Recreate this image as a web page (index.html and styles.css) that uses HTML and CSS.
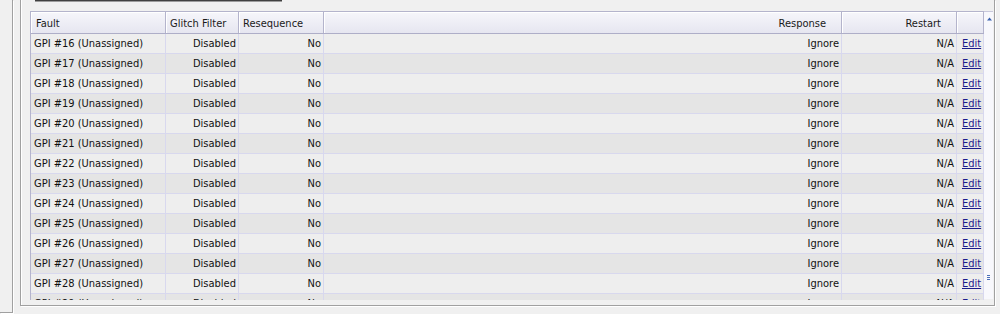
FILE: index.html
```html
<!DOCTYPE html>
<html>
<head>
<meta charset="utf-8">
<link rel="stylesheet" href="styles.css">
</head>
<body>
<div class="page">
  <div class="side"></div>
  <div class="frame">
    <div class="topbar"></div>
    <div class="tablewrap">
      <div class="grid">
        <div class="row head">
          <div class="hc">Fault</div>
          <div class="hc">Glitch Filter</div>
          <div class="hc">Resequence</div>
          <div class="hc r">Response</div>
          <div class="hc r">Restart</div>
          <div class="hc"></div>
        </div>
        <div class="body">
          <div class="row"><div class="c">GPI #16 (Unassigned)</div><div class="c r">Disabled</div><div class="c r">No</div><div class="c r">Ignore</div><div class="c r">N/A</div><div class="c e"><a>Edit</a></div></div>
          <div class="row"><div class="c">GPI #17 (Unassigned)</div><div class="c r">Disabled</div><div class="c r">No</div><div class="c r">Ignore</div><div class="c r">N/A</div><div class="c e"><a>Edit</a></div></div>
          <div class="row"><div class="c">GPI #18 (Unassigned)</div><div class="c r">Disabled</div><div class="c r">No</div><div class="c r">Ignore</div><div class="c r">N/A</div><div class="c e"><a>Edit</a></div></div>
          <div class="row"><div class="c">GPI #19 (Unassigned)</div><div class="c r">Disabled</div><div class="c r">No</div><div class="c r">Ignore</div><div class="c r">N/A</div><div class="c e"><a>Edit</a></div></div>
          <div class="row"><div class="c">GPI #20 (Unassigned)</div><div class="c r">Disabled</div><div class="c r">No</div><div class="c r">Ignore</div><div class="c r">N/A</div><div class="c e"><a>Edit</a></div></div>
          <div class="row"><div class="c">GPI #21 (Unassigned)</div><div class="c r">Disabled</div><div class="c r">No</div><div class="c r">Ignore</div><div class="c r">N/A</div><div class="c e"><a>Edit</a></div></div>
          <div class="row"><div class="c">GPI #22 (Unassigned)</div><div class="c r">Disabled</div><div class="c r">No</div><div class="c r">Ignore</div><div class="c r">N/A</div><div class="c e"><a>Edit</a></div></div>
          <div class="row"><div class="c">GPI #23 (Unassigned)</div><div class="c r">Disabled</div><div class="c r">No</div><div class="c r">Ignore</div><div class="c r">N/A</div><div class="c e"><a>Edit</a></div></div>
          <div class="row"><div class="c">GPI #24 (Unassigned)</div><div class="c r">Disabled</div><div class="c r">No</div><div class="c r">Ignore</div><div class="c r">N/A</div><div class="c e"><a>Edit</a></div></div>
          <div class="row"><div class="c">GPI #25 (Unassigned)</div><div class="c r">Disabled</div><div class="c r">No</div><div class="c r">Ignore</div><div class="c r">N/A</div><div class="c e"><a>Edit</a></div></div>
          <div class="row"><div class="c">GPI #26 (Unassigned)</div><div class="c r">Disabled</div><div class="c r">No</div><div class="c r">Ignore</div><div class="c r">N/A</div><div class="c e"><a>Edit</a></div></div>
          <div class="row"><div class="c">GPI #27 (Unassigned)</div><div class="c r">Disabled</div><div class="c r">No</div><div class="c r">Ignore</div><div class="c r">N/A</div><div class="c e"><a>Edit</a></div></div>
          <div class="row"><div class="c">GPI #28 (Unassigned)</div><div class="c r">Disabled</div><div class="c r">No</div><div class="c r">Ignore</div><div class="c r">N/A</div><div class="c e"><a>Edit</a></div></div>
          <div class="row"><div class="c">GPI #29 (Unassigned)</div><div class="c r">Disabled</div><div class="c r">No</div><div class="c r">Ignore</div><div class="c r">N/A</div><div class="c e"><a>Edit</a></div></div>
        </div>
      </div>
      <div class="scroll">
        <svg class="arrow" width="5" height="4" viewBox="0 0 5 4"><path d="M0 3.5 L2.5 0.5 L5 3.5 Z" fill="#3a62b0"/></svg>
        <svg class="grip" width="4" height="6" viewBox="0 0 4 6"><rect x="0" y="0" width="3" height="1" fill="#4a6fb8"/><rect x="0" y="2" width="3" height="1" fill="#4a6fb8"/><rect x="0" y="4" width="3" height="1" fill="#4a6fb8"/></svg>
      </div>
    </div>
  </div>
</div>
</body>
</html>
```
FILE: styles.css
```css
html, body {
  margin: 0;
  padding: 0;
  background: #f0f0f0;
  font-family: "DejaVu Sans Condensed", "DejaVu Sans", "Liberation Sans", sans-serif;
  font-stretch: condensed;
  font-size: 11px;
  color: #111;
}
.page {
  display: flex;
  align-items: flex-start;
  width: 1000px;
  height: 314px;
  overflow: hidden;
}
.side {
  width: 12px;
  height: 312px;
  border-right: 1px solid #a0a0a0;
  border-bottom: 1px solid #a0a0a0;
  box-shadow: 1px 1px 0 #ffffff;
  flex: none;
}
.frame {
  box-sizing: border-box;
  margin-left: 7px;
  width: 975px;
  height: 306px;
  border-left: 1px solid #a0a0a0;
  border-right: 1px solid #a0a0a0;
  border-bottom: 1px solid #a0a0a0;
  box-shadow: inset 1px 0 0 #ffffff, 1px 1px 0 #ffffff;
  display: flex;
  flex-direction: column;
  padding-left: 9px;
  flex: none;
}
.topbar {
  margin-left: 5px;
  width: 247px;
  height: 1px;
  background: #404040;
  border-bottom: 1px solid #9c9c9c;
  flex: none;
}
.tablewrap {
  margin-top: 9px;
  display: flex;
  height: 289px;
  flex: none;
}
.grid {
  width: 954px;
  height: 289px;
  box-sizing: border-box;
  border-left: 1px solid #b4b4cc;
  border-top: 1px solid #b4b4cc;
  overflow: hidden;
  display: flex;
  flex-direction: column;
}
.row {
  display: grid;
  grid-template-columns: 135px 73px 85px 518px 115px 27px;
  height: 20px;
  box-sizing: border-box;
  border-bottom: 1px solid #d8d8ee;
  background: #eeeeee;
  flex: none;
}
.body .row:nth-child(even) {
  background: #e5e5e5;
}
.row.head {
  height: 22px;
  border-bottom: 1px solid #aeaec8;
  background: linear-gradient(#f6f6fb, #e6e6f0);
}
.hc {
  box-sizing: border-box;
  border-right: 1px solid #b4b4cc;
  box-shadow: inset 1px 1px 0 #ffffff;
  padding: 3px 4px 0 4px;
  line-height: 17px;
  color: #1a1a1a;
  white-space: nowrap;
  overflow: hidden;
}
.hc:first-child {
  padding-left: 5px;
}
.hc.r {
  text-align: right;
  padding-right: 15px;
}
.c {
  box-sizing: border-box;
  border-right: 1px solid #d8d8ee;
  padding: 0 3px;
  line-height: 19px;
  white-space: nowrap;
  overflow: hidden;
}
.c.r {
  text-align: right;
  padding-right: 2px;
}
.c.e {
  padding-left: 5px;
}
.c a {
  color: #1c1c8c;
  text-decoration: underline;
}
.scroll {
  width: 9px;
  height: 288px;
  box-sizing: border-box;
  border-top: 1px solid #c8c8dc;
  background: #f8f8fc;
  display: flex;
  flex-direction: column;
  align-items: center;
  justify-content: space-between;
  padding: 5px 0 18px 1px;
  flex: none;
}
.arrow, .grip {
  display: block;
}
```
